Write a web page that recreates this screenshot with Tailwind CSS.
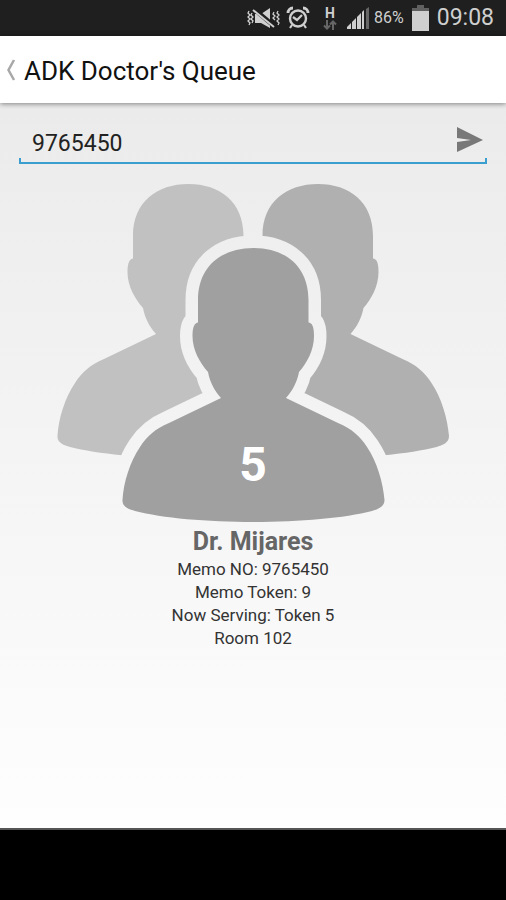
<!DOCTYPE html>
<html lang="en">
<head>
<meta charset="utf-8">
<meta name="viewport" content="width=device-width, initial-scale=1">
<title>ADK Doctor's Queue</title>
<script src="https://cdn.jsdelivr.net/npm/@tailwindcss/browser@4"></script>
</head>
<body class="min-h-screen flex flex-col bg-black font-[Roboto,sans-serif]">
  <div class="flex h-9 items-center justify-end bg-[#1f1f1f] pr-3 text-[#cfcfcf]">
    <svg class="mr-1 h-6 w-9" viewBox="0 0 36 24" fill="none" stroke="#cfcfcf" aria-label="Vibrate" role="img">
      <path d="M9 8h6l9-6v20l-9-5H9z" fill="#cfcfcf" stroke="none"/>
      <path d="M8 3l20 17" stroke="#1f1f1f" stroke-width="4.500"/>
      <path d="M7 4l21 17" stroke-width="2"/>
      <path d="M3 5l-1 2 2 2-2 2 2 2-2 2 2 2-1 2M6 7l-1 2 2 2-2 2 2 2-1 2M28 6l-1 2 2 2-2 2 2 2M32 5l-1 2 2 2-2 2 2 2-2 2 2 2-1 2" stroke-width="1.300"/>
    </svg>
    <svg class="mr-3 h-6 w-6" viewBox="0 0 24 24" fill="none" stroke="#cfcfcf" aria-label="Alarm" role="img">
      <circle cx="12" cy="12.500" r="8" stroke-width="2.400"/>
      <path d="M7 11l4 3 5-5M6 19l-2 3M18 19l2 3" stroke-width="2.200"/>
      <path d="M2 7c0-3 2-5 5-5M22 7c0-3-2-5-5-5" stroke-width="2.800"/>
    </svg>
    <div class="mr-2 flex w-4 flex-col items-center">
      <span class="text-sm leading-[14px] font-bold">H</span>
      <svg class="h-2.5 w-3.5" viewBox="0 0 14 10" fill="none" stroke="#666" stroke-width="2" aria-hidden="true"><path d="M4 0v8M1 5.500l3 3 3-3M10 10V2M7 4.500l3-3 3 3"/></svg>
    </div>
    <svg class="mr-1 h-6 w-6" viewBox="0 0 24 24" fill="#cfcfcf" aria-label="Signal" role="img">
      <path d="M1 23v-2l4-4v6zM6 23v-7l4-4v11zM11 23V11l4-4v16zM16 23V6l2-2v19z"/><path d="M20 23V3l3-2v22z" fill="#666"/>
    </svg>
    <span class="mr-2 text-base">86%</span>
    <svg class="mr-2 h-[26px] w-[17px]" viewBox="0 0 17 26" aria-label="Battery" role="img">
      <path d="M5 0h7v3h5v3H0V3h5z" fill="#606060"/><path d="M0 6h17v20H0z" fill="#d0d0d0"/>
    </svg>
    <span class="text-[23px]">09:08</span>
  </div>

  <header class="relative z-10 flex h-[67px] items-center bg-white pl-1.5 text-[#111] shadow-[0_1px_5px_rgba(0,0,0,0.45)]">
    <button class="mr-1.5 h-6 w-3" aria-label="Back">
      <svg class="h-6 w-3" viewBox="0 0 12 24" fill="none" stroke="#a8a8a8" stroke-width="2.500"><path d="M8 2L2.500 12l5.500 10"/></svg>
    </button>
    <h1 class="pt-0.5 text-[26px] leading-8">ADK Doctor's Queue</h1>
  </header>

  <main class="flex flex-1 flex-col bg-linear-to-b from-[#ebebeb] to-[#fefefe] pt-5">
    <form class="mx-5 flex h-10 items-center">
      <input type="text" value="9765450" aria-label="Memo number" class="h-9 min-w-0 flex-1 bg-transparent pl-3 text-[23px] text-[#222] outline-none">
      <button type="button" aria-label="Send" class="mr-0.5 pb-1.5">
        <svg class="block h-7 w-7" viewBox="0 0 28 28" fill="#787878"><path d="M1 1l26 13L1 26V16l14-2L1 12z"/></svg>
      </button>
    </form>
    <div class="-mt-[5px] mx-[19px] h-1.5 border-x-2 border-b-2 border-[#3a9fcf]"></div>

    <div class="relative">
      <svg class="mt-[11px] block w-full" viewBox="0 175 506 350" role="img" aria-label="Queue">
        <defs>
          <path id="person" d="M253.500 248C285 248 308.500 266 308.500 300V322.500C312 323 314 326 314 336C314 350 307 363 299 372C297 382 293 390 286 398L338 423C352 429 360 436 367 447C377 462 383 482 384.500 500C384.500 507 378 509 372 511C345 518 300 522 253.500 522C207 522 162 518 135 511C129 509 122 507 122.500 500C123.500 482 130 462 140 447C147 436 155 429 169 423L221 398C214 390 210 382 208 372C200 363 192.500 350 192.500 336C192.500 326 195 323 198 322.500V300C198 266 222 248 253.500 248Z"/>
          <mask id="halo" maskUnits="userSpaceOnUse" x="0" y="175" width="506" height="350">
            <path d="M0 175h506v350H0z" fill="#fff"/>
            <use href="#person" fill="#000" stroke="#000" stroke-width="25" stroke-linejoin="round"/>
          </mask>
          <clipPath id="left"><path d="M0 175h253v350H0z"/></clipPath>
          <clipPath id="right"><path d="M253 175h253v350H253z"/></clipPath>
        </defs>
        <g mask="url(#halo)">
          <g clip-path="url(#left)"><use href="#person" x="-65" y="-64" fill="#c1c1c1"/></g>
          <g clip-path="url(#right)"><use href="#person" x="64.500" y="-64" fill="#b0b0b0"/></g>
        </g>
        <use href="#person" fill="#a0a0a0"/>
      </svg>
      <p class="absolute inset-x-0 bottom-[30px] text-center text-5xl leading-[60px] font-bold text-white">5</p>
    </div>

    <section class="text-center text-[17px] leading-[23px] text-[#333]">
      <h2 class="pt-px text-[25px] leading-8 font-bold text-[#666]">Dr. Mijares</h2>
      <p>Memo NO: 9765450</p>
      <p>Memo Token: 9</p>
      <p>Now Serving: Token 5</p>
      <p>Room 102</p>
    </section>
  </main>
  <footer class="h-[72px] border-t-2 border-[#555] bg-black"></footer>
</body>
</html>
